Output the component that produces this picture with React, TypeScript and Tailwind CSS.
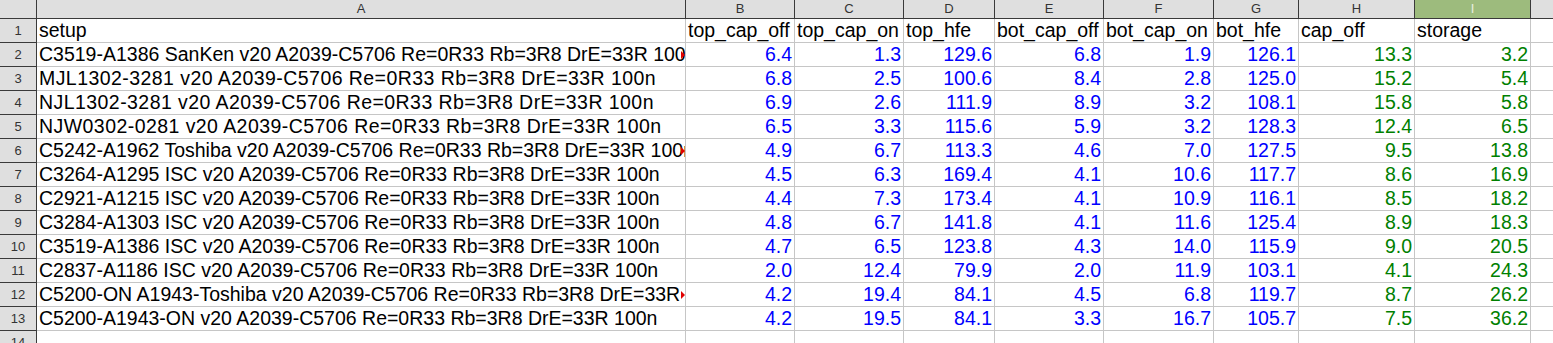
import React from "react";

type Row = { a: string; v: string[]; overflow?: boolean; wide?: boolean };

const rows: Row[] = [
  { a: "C3519-A1386 SanKen v20 A2039-C5706 Re=0R33 Rb=3R8 DrE=33R 100n", v: ["6.4", "1.3", "129.6", "6.8", "1.9", "126.1", "13.3", "3.2"], overflow: true },
  { a: "MJL1302-3281 v20 A2039-C5706 Re=0R33 Rb=3R8 DrE=33R 100n", v: ["6.8", "2.5", "100.6", "8.4", "2.8", "125.0", "15.2", "5.4"], wide: true },
  { a: "NJL1302-3281 v20 A2039-C5706 Re=0R33 Rb=3R8 DrE=33R 100n", v: ["6.9", "2.6", "111.9", "8.9", "3.2", "108.1", "15.8", "5.8"], wide: true },
  { a: "NJW0302-0281 v20 A2039-C5706 Re=0R33 Rb=3R8 DrE=33R 100n", v: ["6.5", "3.3", "115.6", "5.9", "3.2", "128.3", "12.4", "6.5"], wide: true },
  { a: "C5242-A1962 Toshiba v20 A2039-C5706 Re=0R33 Rb=3R8 DrE=33R 100n", v: ["4.9", "6.7", "113.3", "4.6", "7.0", "127.5", "9.5", "13.8"], overflow: true },
  { a: "C3264-A1295 ISC v20 A2039-C5706 Re=0R33 Rb=3R8 DrE=33R 100n", v: ["4.5", "6.3", "169.4", "4.1", "10.6", "117.7", "8.6", "16.9"] },
  { a: "C2921-A1215 ISC v20 A2039-C5706 Re=0R33 Rb=3R8 DrE=33R 100n", v: ["4.4", "7.3", "173.4", "4.1", "10.9", "116.1", "8.5", "18.2"] },
  { a: "C3284-A1303 ISC v20 A2039-C5706 Re=0R33 Rb=3R8 DrE=33R 100n", v: ["4.8", "6.7", "141.8", "4.1", "11.6", "125.4", "8.9", "18.3"] },
  { a: "C3519-A1386 ISC v20 A2039-C5706 Re=0R33 Rb=3R8 DrE=33R 100n", v: ["4.7", "6.5", "123.8", "4.3", "14.0", "115.9", "9.0", "20.5"] },
  { a: "C2837-A1186 ISC v20 A2039-C5706 Re=0R33 Rb=3R8 DrE=33R 100n", v: ["2.0", "12.4", "79.9", "2.0", "11.9", "103.1", "4.1", "24.3"] },
  { a: "C5200-ON A1943-Toshiba v20 A2039-C5706 Re=0R33 Rb=3R8 DrE=33R 100n", v: ["4.2", "19.4", "84.1", "4.5", "6.8", "119.7", "8.7", "26.2"], overflow: true },
  { a: "C5200-A1943-ON v20 A2039-C5706 Re=0R33 Rb=3R8 DrE=33R 100n", v: ["4.2", "19.5", "84.1", "3.3", "16.7", "105.7", "7.5", "36.2"] },
];

const headers = ["top_cap_off", "top_cap_on", "top_hfe", "bot_cap_off", "bot_cap_on", "bot_hfe", "cap_off", "storage"];
const letters = ["B", "C", "D", "E", "F", "G", "H", "I"];
const widths = ["w-[109px]", "w-[109px]", "w-[91px]", "w-[109px]", "w-[110px]", "w-[85px]", "w-[116px]", "w-[116px]"];

const font = { fontFamily: '"Liberation Sans", Arial, sans-serif' };

function RowHead({ n }: { n: number }) {
  return (
    <div className="w-[37px] shrink-0 h-full bg-[#dfdfdf] border-r border-b border-[#3a3a3a] text-center text-[13px] leading-[23px] text-[#333333]">
      {n}
    </div>
  );
}

export default function App() {
  return (
    <div className="w-[1553px] h-[343px] overflow-hidden bg-white" style={font}>
      {/* column header */}
      <div className="flex h-[19px]">
        <div className="w-[37px] shrink-0 h-full bg-[#dfdfdf] border-r border-b border-[#3a3a3a]" />
        <div className="w-[649px] shrink-0 h-full bg-[#dfdfdf] border-r border-b border-[#3a3a3a] text-center text-[13px] leading-[18px] text-[#333333]">A</div>
        {letters.map((l, i) => (
          <div
            key={l}
            className={`${widths[i]} shrink-0 h-full border-r border-b border-[#3a3a3a] text-center text-[13px] leading-[18px] ${l === "I" ? "bg-[#9dbb7d] text-[#e8efe0]" : "bg-[#dfdfdf] text-[#333333]"}`}
          >
            {l}
          </div>
        ))}
        <div className="flex-1 h-full bg-[#dfdfdf] border-b border-[#3a3a3a]" />
      </div>

      {/* row 1 */}
      <div className="flex h-[24px]">
        <RowHead n={1} />
        <div className="w-[649px] shrink-0 h-full border-r border-b border-[#c6c6c6] pl-[2px] text-[19.5px] leading-[23px] text-black whitespace-nowrap overflow-hidden">setup</div>
        {headers.map((h, i) => (
          <div key={h} className={`${widths[i]} shrink-0 h-full border-r border-b border-[#c6c6c6] pl-[2px] text-[19.5px] leading-[23px] text-black whitespace-nowrap overflow-hidden`}>
            {h}
          </div>
        ))}
        <div className="flex-1 h-full border-b border-[#c6c6c6]" />
      </div>

      {rows.map((r, ri) => (
        <div key={ri} className="flex h-[24px]">
          <RowHead n={ri + 2} />
          <div
            className={`relative w-[649px] shrink-0 h-full border-r border-b border-[#c6c6c6] pl-[2px] text-[19.5px] leading-[23px] text-black whitespace-nowrap overflow-hidden ${r.wide ? "tracking-[0.44px]" : ""}`}
          >
            {r.a}
            {r.overflow && (
              <span className="absolute right-0 top-[8px] w-0 h-0 border-y-[4px] border-y-transparent border-l-[4px] border-l-[#e00000]" />
            )}
          </div>
          {r.v.map((v, i) => (
            <div
              key={i}
              className={`${widths[i]} shrink-0 h-full border-r border-b border-[#c6c6c6] pr-[2px] text-right text-[19.5px] leading-[23px] whitespace-nowrap overflow-hidden ${i >= 6 ? "text-[#008000]" : "text-[#0000ff]"}`}
            >
              {v}
            </div>
          ))}
          <div className="flex-1 h-full border-b border-[#c6c6c6]" />
        </div>
      ))}

      {/* row 14 */}
      <div className="flex h-[24px]">
        <RowHead n={14} />
        <div className="w-[649px] shrink-0 h-full border-r border-b border-[#c6c6c6]" />
        {widths.map((w, i) => (
          <div key={i} className={`${w} shrink-0 h-full border-r border-b border-[#c6c6c6]`} />
        ))}
        <div className="flex-1 h-full border-b border-[#c6c6c6]" />
      </div>
    </div>
  );
}
